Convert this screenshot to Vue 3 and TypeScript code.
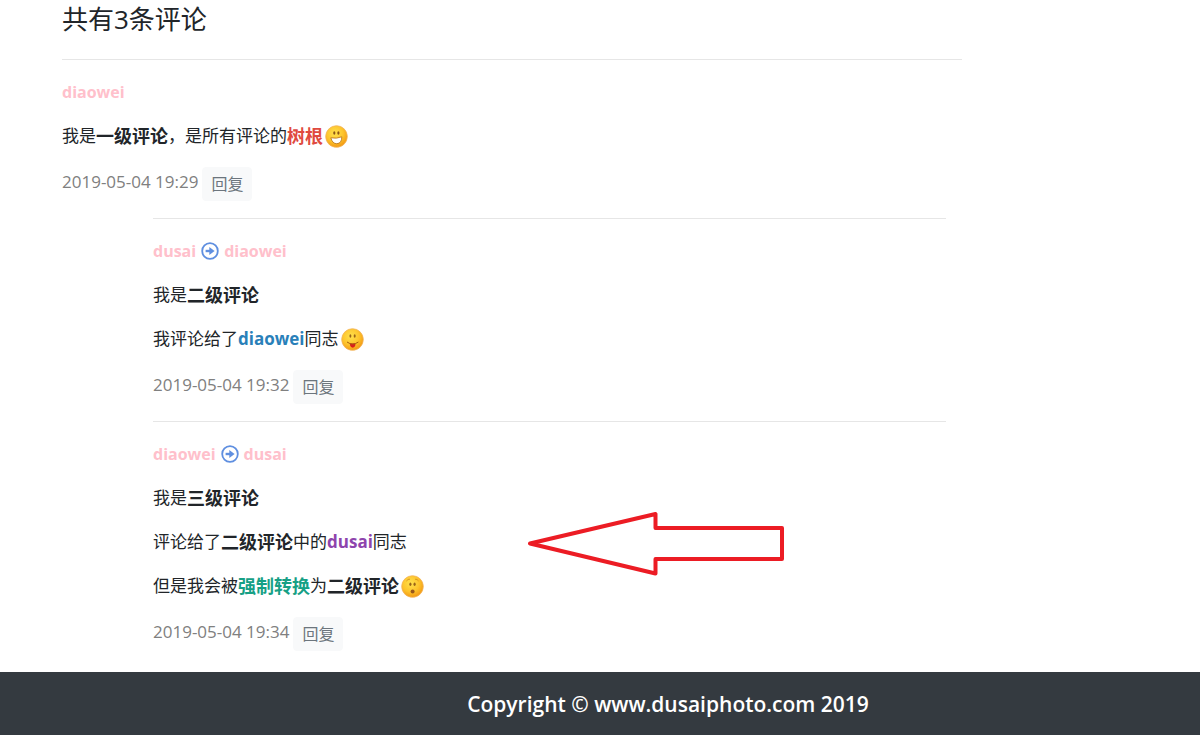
<script setup lang="ts">
type Mood = 'grin' | 'tongue' | 'gasp'
type Tone = 'plain' | 'strong' | 'red' | 'green' | 'blue' | 'purple'

interface Run {
  text: string
  tone: Tone
}

interface Line {
  runs: Run[]
  mood?: Mood
}

interface Comment {
  id: number
  author: string
  target?: string
  time: string
  lines: Line[]
  marked?: boolean
}

const run = (text: string, tone: Tone = 'plain'): Run => ({ text, tone })

const comments: Comment[] = [
  {
    id: 1,
    author: 'diaowei',
    time: '2019-05-04 19:29',
    lines: [
      {
        runs: [run('我是'), run('一级评论', 'strong'), run('，是所有评论的'), run('树根', 'red')],
        mood: 'grin',
      },
    ],
  },
  {
    id: 2,
    author: 'dusai',
    target: 'diaowei',
    time: '2019-05-04 19:32',
    lines: [
      { runs: [run('我是'), run('二级评论', 'strong')] },
      { runs: [run('我评论给了'), run('diaowei', 'blue'), run('同志')], mood: 'tongue' },
    ],
  },
  {
    id: 3,
    author: 'diaowei',
    target: 'dusai',
    time: '2019-05-04 19:34',
    marked: true,
    lines: [
      { runs: [run('我是'), run('三级评论', 'strong')] },
      { runs: [run('评论给了'), run('二级评论', 'strong'), run('中的'), run('dusai', 'purple'), run('同志')] },
      {
        runs: [run('但是我会被'), run('强制转换', 'green'), run('为'), run('二级评论', 'strong')],
        mood: 'gasp',
      },
    ],
  },
]
</script>

<template>
  <div class="page">
    <svg class="defs" aria-hidden="true">
      <defs>
        <radialGradient id="face" cx="0.42" cy="0.35" r="0.65">
          <stop offset="0" stop-color="#ffe14d" />
          <stop offset="0.6" stop-color="#fdc42c" />
          <stop offset="1" stop-color="#f39a14" />
        </radialGradient>
      </defs>
    </svg>

    <main class="comments">
      <h4 class="title">共有3条评论</h4>

      <article
        v-for="comment in comments"
        :key="comment.id"
        class="comment"
        :class="{ nested: comment.target }"
      >
        <p class="people">
          <strong>{{ comment.author }}</strong>
          <template v-if="comment.target">
            <svg class="to" viewBox="0 0 18 18" role="img" aria-label="回复给">
              <circle cx="9" cy="9" r="7.8" />
              <path class="shaft" d="M4.6 9H11" />
              <path class="head" d="M8.3 5 L13.6 9 L8.3 13 Z" />
            </svg>
            <strong>{{ comment.target }}</strong>
          </template>
        </p>

        <p v-for="(line, i) in comment.lines" :key="i" class="line">
          <component
            :is="part.tone === 'plain' ? 'span' : 'strong'"
            v-for="(part, j) in line.runs"
            :key="j"
            :class="part.tone"
          >{{ part.text }}</component>
          <svg v-if="line.mood" class="emoji" viewBox="0 0 23 23" aria-hidden="true">
            <circle cx="11.5" cy="11.5" r="10.8" fill="url(#face)" stroke="#f3b45a" stroke-width="0.8" />
            <template v-if="line.mood === 'grin'">
              <ellipse cx="9.3" cy="8" rx="1.1" ry="1.7" fill="#8a5515" />
              <ellipse cx="13.4" cy="8" rx="1.1" ry="1.7" fill="#8a5515" />
              <path d="M5.8 12.8 Q11.5 14 16.8 11.8 Q16.8 18.4 11.8 18.7 Q7.4 18.7 5.8 12.8Z" fill="#fff" stroke="#b56f14" stroke-width="0.8" />
            </template>
            <template v-else-if="line.mood === 'tongue'">
              <ellipse cx="9.4" cy="8" rx="1" ry="1.7" fill="#9a6418" />
              <ellipse cx="13.7" cy="8" rx="1" ry="1.7" fill="#9a6418" />
              <path d="M8.8 15.6 H14.6 Q14.4 19.6 11.7 19.8 Q9 19.6 8.8 15.6Z" fill="#d8201c" />
              <path d="M6 14 Q11.6 18 17.4 14" fill="none" stroke="#a65d10" stroke-width="1" />
            </template>
            <template v-else>
              <path d="M5.4 6 Q7 3.8 9 4.2 M14 4.2 Q16.2 3.8 17.6 6" fill="none" stroke="#cf8a1a" stroke-width="0.8" />
              <ellipse cx="9.4" cy="9.2" rx="1.1" ry="1.7" fill="#9a6418" />
              <ellipse cx="13.6" cy="9.2" rx="1.1" ry="1.7" fill="#9a6418" />
              <ellipse cx="11.6" cy="16.4" rx="2" ry="2" fill="#99571a" />
            </template>
          </svg>
        </p>

        <div class="meta">
          <time>{{ comment.time }}</time>
          <button type="button" class="reply">回复</button>
        </div>

        <svg v-if="comment.marked" class="pointer" viewBox="0 0 258 66" aria-hidden="true">
          <path d="M3 32.5 L128.5 3 V17 H255 V48 H128.5 V62.5 Z" />
        </svg>
      </article>
    </main>

    <footer class="footer">Copyright © www.dusaiphoto.com 2019</footer>
  </div>
</template>

<style>
body {
  margin: 0;
  background: #fff;
}
</style>

<style scoped>
.page {
  display: flex;
  flex-direction: column;
  min-height: 100vh;
  overflow: hidden;
  color: #212529;
  font-family: "Open Sans", "Noto Sans CJK SC", sans-serif;
  font-size: 17px;
  line-height: 26px;
}

.defs {
  position: absolute;
  width: 0;
  height: 0;
}

.comments {
  width: 75%;
  margin-left: 62px;
  padding-bottom: 21px;
}

.title {
  margin: 3px 0 24px;
  font-size: 26px;
  font-weight: 400;
  line-height: 32px;
}

.comment {
  position: relative;
  padding-top: 19px;
  border-top: 1px solid #e6e6e6;
}

.comment + .comment {
  margin-top: 17px;
}

.nested {
  margin-left: 91px;
  margin-right: 16px;
}

.people,
.line {
  display: flex;
  align-items: center;
  height: 26px;
  margin: 0 0 18px;
  white-space: nowrap;
}

.people {
  gap: 5px;
  color: pink;
  font-size: 16px;
}

.to {
  width: 18px;
  height: 18px;
}

.to circle {
  fill: none;
  stroke: #5f8fe0;
  stroke-width: 1.8;
}

.to .shaft {
  fill: none;
  stroke: #5f8fe0;
  stroke-width: 2.4;
}

.to .head {
  fill: #5f8fe0;
}

.strong,
.red,
.green {
  font-size: 18px;
}

.red {
  color: #e04a3f;
}

.green {
  color: #16a085;
}

.blue {
  color: #2980b9;
}

.purple {
  color: #8e44ad;
}

.emoji {
  flex: none;
  width: 23px;
  height: 23px;
  margin-left: 2px;
}

.meta {
  display: flex;
  align-items: center;
  gap: 4px;
  height: 34px;
}

.meta time {
  padding-bottom: 4px;
  color: #808080;
}

.reply {
  padding: 4px 8px;
  border: 1px solid #f8f9fa;
  border-radius: 4px;
  background: #f8f9fa;
  color: #6c757d;
  font-family: inherit;
  font-size: 16px;
  line-height: 24px;
}

.pointer {
  position: absolute;
  top: 89px;
  left: 374px;
  width: 258px;
  height: 66px;
}

.pointer path {
  fill: none;
  stroke: #ec1c24;
  stroke-width: 4;
  stroke-linejoin: round;
}

.footer {
  flex: 1 0 auto;
  padding: 16px 0 15px 136px;
  background: #343a40;
  color: #fff;
  font-size: 21px;
  font-weight: 600;
  line-height: 32px;
  text-align: center;
}
</style>
